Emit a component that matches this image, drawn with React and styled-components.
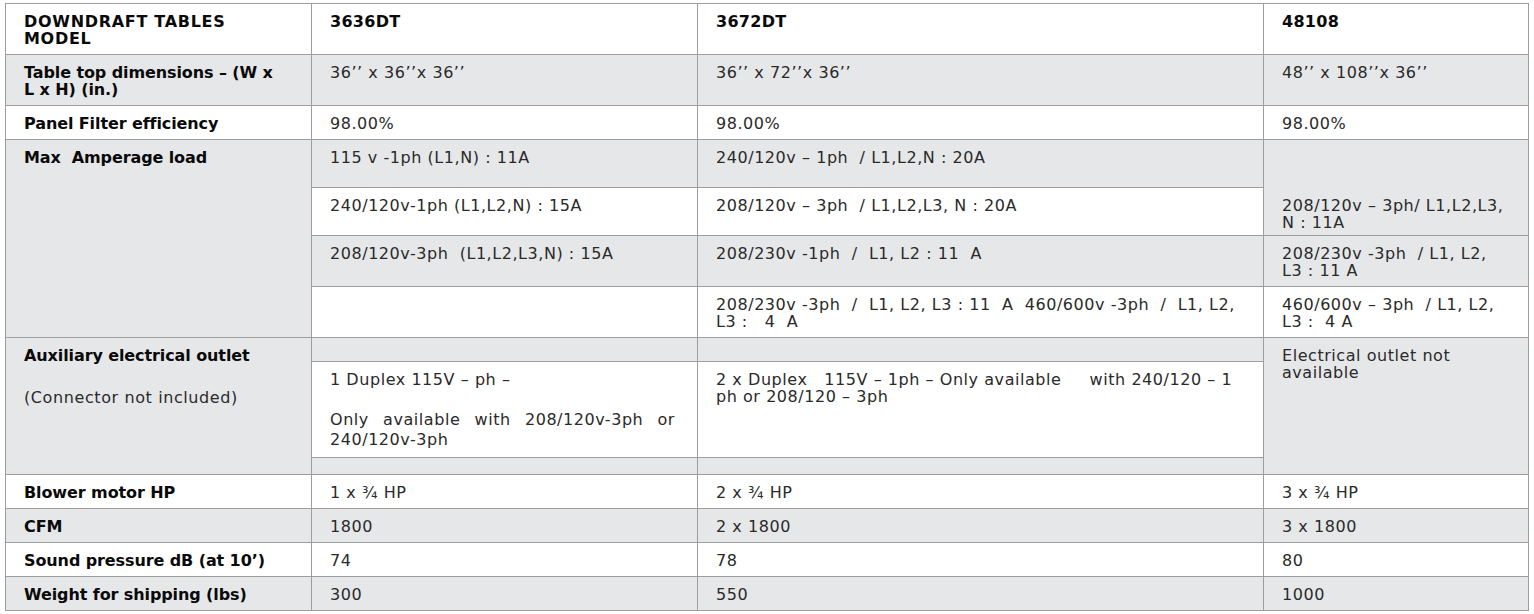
import React from 'react';
import styled, { createGlobalStyle } from 'styled-components';

const GlobalStyle = createGlobalStyle`
  body {
    margin: 0;
    background: #fff;
  }
`;

const Page = styled.div`
  padding: 3px 0 0 5px;
`;

const SpecTable = styled.table`
  border-collapse: collapse;
  table-layout: fixed;
  width: 1523px;
  font-family: 'DejaVu Sans', 'Liberation Sans', sans-serif;
`;

const Row = styled.tr`
  height: ${(p) => p.$h}px;
`;

const cellBase = `
  border: 1px solid #9d9d9d;
  vertical-align: top;
  text-align: left;
  padding: 9px 8px 0 18px;
  line-height: 17px;
  white-space: pre;
`;

const LabelCell = styled.th`
  ${cellBase}
  background: ${(p) => (p.$shade ? '#e6e7e9' : '#fff')};
  font-size: 16px;
  font-weight: 700;
  letter-spacing: ${(p) => (p.$caps ? 0.7 : -0.1)}px;
  color: #0a0a0a;
`;

const HeadCell = styled.th`
  ${cellBase}
  background: #fff;
  font-size: 16px;
  font-weight: 700;
  letter-spacing: 0.3px;
  color: #0a0a0a;
`;

const ValueCell = styled.td`
  ${cellBase}
  background: ${(p) => (p.$shade ? '#e6e7e9' : '#fff')};
  font-size: 16px;
  font-weight: 400;
  letter-spacing: 0.55px;
  color: #2a2a2a;
  padding-top: ${(p) => (p.$pt !== undefined ? p.$pt : 9)}px;
  padding-right: ${(p) => (p.$pr !== undefined ? p.$pr : 8)}px;
  line-height: ${(p) => p.$lh || 17}px;
`;

const Note = styled.div`
  margin-top: ${(p) => p.$gap || 0}px;
  font-weight: ${(p) => (p.$plain ? 400 : 'inherit')};
  letter-spacing: ${(p) => (p.$plain ? '0.6px' : 'inherit')};
  color: ${(p) => (p.$plain ? '#2a2a2a' : 'inherit')};
`;

const JustifiedLine = styled.div`
  white-space: normal;
  text-align: justify;
  text-align-last: justify;
`;

const simpleRows = [
  { label: 'Blower motor HP', values: ['1 x ¾ HP', '2 x ¾ HP', '3 x ¾ HP'] },
  { label: 'CFM', values: ['1800', '2 x 1800', '3 x 1800'], shade: true },
  { label: 'Sound pressure dB (at 10’)', values: ['74', '78', '80'] },
  { label: 'Weight for shipping (lbs)', values: ['300', '550', '1000'], shade: true },
];

export default function App() {
  return (
    <Page>
      <GlobalStyle />
      <SpecTable>
        <colgroup>
          <col style={{ width: 306 }} />
          <col style={{ width: 386 }} />
          <col style={{ width: 566 }} />
          <col style={{ width: 265 }} />
        </colgroup>
        <tbody>
          <Row $h={51}>
            <LabelCell $caps>{'DOWNDRAFT TABLES\nMODEL'}</LabelCell>
            <HeadCell>3636DT</HeadCell>
            <HeadCell>3672DT</HeadCell>
            <HeadCell>48108</HeadCell>
          </Row>
          <Row $h={51}>
            <LabelCell $shade>{'Table top dimensions – (W x\nL x H) (in.)'}</LabelCell>
            <ValueCell $shade>36’’ x 36’’x 36’’</ValueCell>
            <ValueCell $shade>36’’ x 72’’x 36’’</ValueCell>
            <ValueCell $shade>48’’ x 108’’x 36’’</ValueCell>
          </Row>
          <Row $h={34}>
            <LabelCell>Panel Filter efficiency</LabelCell>
            <ValueCell>98.00%</ValueCell>
            <ValueCell>98.00%</ValueCell>
            <ValueCell>98.00%</ValueCell>
          </Row>

          <Row $h={48}>
            <LabelCell $shade rowSpan={4}>{'Max  Amperage load'}</LabelCell>
            <ValueCell $shade>115 v -1ph (L1,N) : 11A</ValueCell>
            <ValueCell $shade>{'240/120v – 1ph  / L1,L2,N : 20A'}</ValueCell>
            <ValueCell $shade rowSpan={2} $pt={57}>
              {'208/120v – 3ph/ L1,L2,L3,\nN : 11A'}
            </ValueCell>
          </Row>
          <Row $h={48}>
            <ValueCell>240/120v-1ph (L1,L2,N) : 15A</ValueCell>
            <ValueCell>{'208/120v – 3ph  / L1,L2,L3, N : 20A'}</ValueCell>
          </Row>
          <Row $h={51}>
            <ValueCell $shade>{'208/120v-3ph  (L1,L2,L3,N) : 15A'}</ValueCell>
            <ValueCell $shade>{'208/230v -1ph  /  L1, L2 : 11  A'}</ValueCell>
            <ValueCell $shade>{'208/230v -3ph  / L1, L2,\nL3 : 11 A'}</ValueCell>
          </Row>
          <Row $h={51}>
            <ValueCell />
            <ValueCell>
              {'208/230v -3ph  /  L1, L2, L3 : 11  A  460/600v -3ph  /  L1, L2,\nL3 :   4  A'}
            </ValueCell>
            <ValueCell>{'460/600v – 3ph  / L1, L2,\nL3 :  4 A'}</ValueCell>
          </Row>

          <Row $h={24}>
            <LabelCell $shade rowSpan={3}>
              <Note>Auxiliary electrical outlet</Note>
              <Note $gap={25} $plain>
                (Connector not included)
              </Note>
            </LabelCell>
            <ValueCell $shade />
            <ValueCell $shade />
            <ValueCell $shade rowSpan={3}>
              {'Electrical outlet not\navailable'}
            </ValueCell>
          </Row>
          <Row $h={96}>
            <ValueCell $pt={8} $lh={20} $pr={22}>
              <Note>1 Duplex 115V – ph –</Note>
              <Note $gap={20}>
                <JustifiedLine>Only available with 208/120v-3ph or</JustifiedLine>
                240/120v-3ph
              </Note>
            </ValueCell>
            <ValueCell>
              {'2 x Duplex   115V – 1ph – Only available     with 240/120 – 1\nph or 208/120 – 3ph'}
            </ValueCell>
          </Row>
          <Row $h={17}>
            <ValueCell $shade $pt={0} />
            <ValueCell $shade $pt={0} />
          </Row>

          {simpleRows.map((r) => (
            <Row $h={34} key={r.label}>
              <LabelCell $shade={r.shade}>{r.label}</LabelCell>
              {r.values.map((v, i) => (
                <ValueCell $shade={r.shade} key={i}>
                  {v}
                </ValueCell>
              ))}
            </Row>
          ))}
        </tbody>
      </SpecTable>
    </Page>
  );
}
